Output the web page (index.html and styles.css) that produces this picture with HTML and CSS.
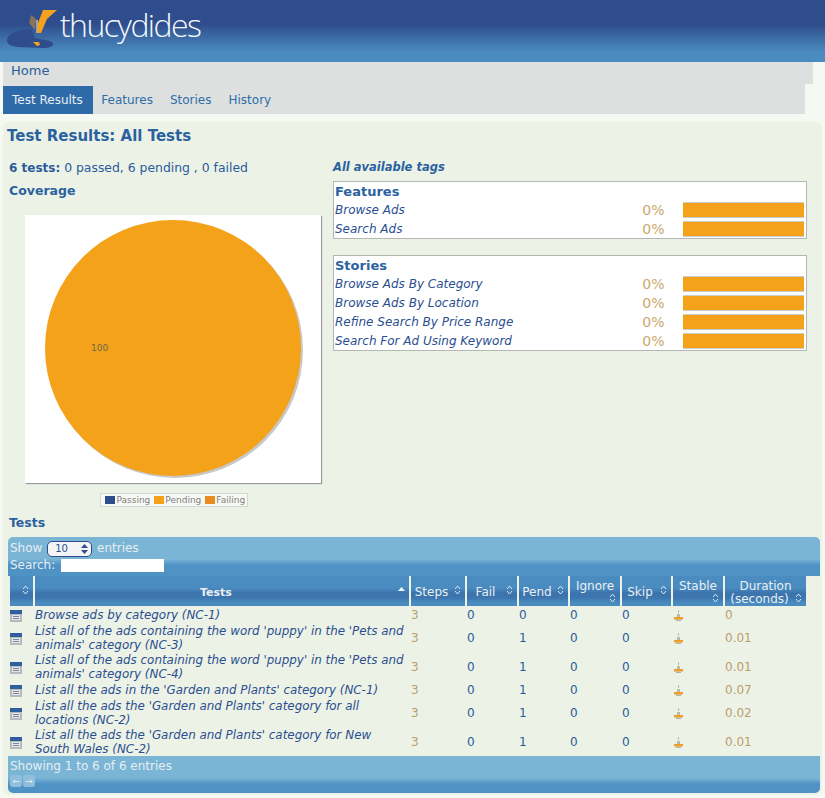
FILE: index.html
```html
<!doctype html>
<html>
  <head>
    <title>Thucydides Reports</title>
    <meta charset="utf-8"/>
    <link rel="stylesheet" href="styles.css">
  </head>
  <body>
    <div class="banner">
      <svg class="logo" width="58" height="50" viewBox="0 0 58 50">
        <path d="M2 35C3 28 12 25 26 24L30 33C38 35 46 35 48 38C49 41 45 43 38 43L12 42C6 41 2 39 2 35z" fill="#2f4c8c"/>
        <path d="M26 10L31 14 30 25 24 18z" fill="#f4a21e" opacity=".45"/>
        <path d="M31 15h2v13h-2z" fill="#9aa6b0"/>
        <path d="M38 5H52L42 14 36 28H32L33 18z" fill="#f4a21e"/>
        <path d="M28 37H34L35 40 32 41z" fill="#f4a21e"/>
      </svg>
      <span class="brand">thucydides</span>
    </div>
    <div class="nav-top"><a href="#">Home</a></div>
    <div class="nav-sub">
      <a class="on" href="#">Test Results</a>
      <a href="#">Features</a>
      <a href="#">Stories</a>
      <a href="#">History</a>
    </div>
    <div class="panel">
      <h1>Test Results: All Tests</h1>
      <div class="cols">
        <div class="left">
          <p class="summary"><b>6 tests:</b> 0 passed, 6 pending , 0 failed</p>
          <h2>Coverage</h2>
          <div class="chart">
            <svg width="296" height="268" viewBox="0 0 296 268">
              <circle cx="150" cy="135" r="128" fill="#c8c8c8"/>
              <circle cx="148" cy="133" r="128" fill="#f4a21a"/>
              <text x="66" y="136" class="pie-label">100</text>
            </svg>
          </div>
          <div class="legend">
            <i class="sw sw-pass"></i>Passing
            <i class="sw sw-pend"></i>Pending
            <i class="sw sw-fail"></i>Failing
          </div>
        </div>
        <div class="right">
          <p class="tags-title">All available tags</p>
          <div class="tagbox">
            <h3>Features</h3>
            <div class="tag"><em>Browse Ads</em><span class="pct">0%</span><span class="bar"></span></div>
            <div class="tag"><em>Search Ads</em><span class="pct">0%</span><span class="bar"></span></div>
          </div>
          <div class="tagbox">
            <h3>Stories</h3>
            <div class="tag"><em>Browse Ads By Category</em><span class="pct">0%</span><span class="bar"></span></div>
            <div class="tag"><em>Browse Ads By Location</em><span class="pct">0%</span><span class="bar"></span></div>
            <div class="tag"><em>Refine Search By Price Range</em><span class="pct">0%</span><span class="bar"></span></div>
            <div class="tag"><em>Search For Ad Using Keyword</em><span class="pct">0%</span><span class="bar"></span></div>
          </div>
        </div>
      </div>
      <h2 class="tests-title">Tests</h2>
      <div class="toolbar top">
        <div>Show <span class="select">10<svg width="7" height="10" viewBox="0 0 7 10"><path d="M3.5 0L7 4H0zM3.5 10L0 6h7z" fill="#2f4c8c"/></svg></span> entries</div>
        <div>Search: <span class="search"></span></div>
      </div>
      <table>
        <colgroup>
          <col class="c0"><col class="c1"><col class="c2"><col class="c3"><col class="c4"><col class="c5"><col class="c6"><col class="c7"><col class="c8">
        </colgroup>
        <thead>
          <tr>
            <th class="sort"></th>
            <th class="up">Tests</th>
            <th class="sort lt">Steps</th>
            <th class="sort lt">Fail</th>
            <th class="sort lt">Pend</th>
            <th class="sort tall">Ignore</th>
            <th class="sort lt">Skip</th>
            <th class="sort tall">Stable</th>
            <th class="sort tall">Duration<br><span class="unit">(seconds)</span></th>
          </tr>
        </thead>
        <tbody>
          <tr><td><svg class="cal"><use href="#cal"/></svg></td><td class="name">Browse ads by category (NC-1)</td><td class="o">3</td><td>0</td><td>0</td><td>0</td><td>0</td><td><svg class="st"><use href="#st"/></svg></td><td class="o">0</td></tr>
          <tr><td><svg class="cal"><use href="#cal"/></svg></td><td class="name">List all of the ads containing the word 'puppy' in the 'Pets and animals' category (NC-3)</td><td class="o">3</td><td>0</td><td>1</td><td>0</td><td>0</td><td><svg class="st"><use href="#st"/></svg></td><td class="o">0.01</td></tr>
          <tr><td><svg class="cal"><use href="#cal"/></svg></td><td class="name">List all of the ads containing the word 'puppy' in the 'Pets and animals' category (NC-4)</td><td class="o">3</td><td>0</td><td>1</td><td>0</td><td>0</td><td><svg class="st"><use href="#st"/></svg></td><td class="o">0.01</td></tr>
          <tr><td><svg class="cal"><use href="#cal"/></svg></td><td class="name">List all the ads in the 'Garden and Plants' category (NC-1)</td><td class="o">3</td><td>0</td><td>1</td><td>0</td><td>0</td><td><svg class="st"><use href="#st"/></svg></td><td class="o">0.07</td></tr>
          <tr><td><svg class="cal"><use href="#cal"/></svg></td><td class="name">List all the ads the 'Garden and Plants' category for all locations (NC-2)</td><td class="o">3</td><td>0</td><td>1</td><td>0</td><td>0</td><td><svg class="st"><use href="#st"/></svg></td><td class="o">0.02</td></tr>
          <tr><td><svg class="cal"><use href="#cal"/></svg></td><td class="name">List all the ads the 'Garden and Plants' category for New South Wales (NC-2)</td><td class="o">3</td><td>0</td><td>1</td><td>0</td><td>0</td><td><svg class="st"><use href="#st"/></svg></td><td class="o">0.01</td></tr>
        </tbody>
      </table>
      <div class="toolbar bottom">
        <div>Showing 1 to 6 of 6 entries</div>
        <div class="pager"><span>&#8592;</span><span>&#8594;</span></div>
      </div>
    </div>
    <svg class="defs" width="0" height="0">
      <symbol id="cal" viewBox="0 0 12 13">
        <rect y="2" width="12" height="11" fill="#b5bac0"/>
        <rect y="1" width="12" height="4" fill="#2f5f9e"/>
        <rect x="2" y="6" width="8" height="5" fill="#e4e8ea"/>
        <path d="M3 7.5h6M3 9.5h6" stroke="#7d8791"/>
      </symbol>
      <symbol id="st" viewBox="0 0 12 13">
        <path d="M5 1h1v3H5zM4 5h3v3H4z" fill="#b9b9b0"/>
        <path d="M1 8h9v2.500H1z" fill="#ef9f25"/>
        <path d="M3 10.500h5V12H3z" fill="#b9b1a0"/>
      </symbol>
    </svg>
  </body>
</html>
```

FILE: styles.css
```css
*{
  box-sizing:border-box;
}
html,body{
  margin:0;
  padding:0;
}
body{
  background:#f6f8f2;
  font-family:"DejaVu Sans",Verdana,sans-serif;
  font-size:12px;
  color:#2a4f8f;
  width:825px;
  height:798px;
  overflow:hidden;
}
a{
  text-decoration:none;
  color:inherit;
}
.banner{
  height:62px;
  display:flex;
  align-items:flex-start;
  padding:5px 0 0 5px;
  background:linear-gradient(#2f4c8c 0,#2f4c8c 24px,#4a8bc0 52px,#4a8bc0 62px);
}
.logo{
  flex:none;
}
.brand{
  font-family:"Open Sans",sans-serif;
  font-weight:300;
  font-size:32px;
  line-height:40px;
  letter-spacing:-1.6px;
  color:#f2f7fb;
  margin-left:-3px;
}
.nav-top{
  height:22px;
  width:810px;
  margin-left:3px;
  background:#dde0df;
  padding:1px 0 0 8px;
  font-size:13px;
  line-height:16px;
  color:#2a5c9a;
}
.nav-sub{
  height:30px;
  width:802px;
  margin-left:3px;
  padding-top:2px;
  background:#dde0df;
  display:flex;
  color:#2f6da8;
}
.nav-sub a{
  padding:0 8.5px;
  line-height:28px;
  font-size:12px;
}
.nav-sub a.on{
  padding:0 10px 0 9px;
  background:#2f6aa8;
  color:#e9eff2;
}
.panel{
  margin:8px 3px 0;
  height:673px;
  background:#edf2e7;
  border-radius:6px;
  padding:0 2px 0 4px;
}
h1{
  margin:0;
  padding-top:4px;
  font-size:15px;
  line-height:20px;
  color:#2a62a0;
}
.cols{
  display:flex;
}
.left{
  width:326px;
  padding-left:2px;
}
.summary{
  margin:13px 0 0;
  font-size:12.4px;
  line-height:18px;
  color:#2a5c9a;
}
.summary b{
  font-size:12px;
}
h2{
  margin:5px 0 0;
  font-size:12.5px;
  line-height:17px;
  color:#2a62a0;
}
.chart{
  margin:16px 0 0 16px;
  width:296px;
  height:268px;
  background:#fff;
  box-shadow:1px 1px 1px #999;
}
.pie-label{
  font-size:9px;
  fill:#6d6a50;
}
.legend{
  display:flex;
  width:max-content;
  align-items:center;
  gap:1.5px;
  height:14px;
  margin:10px 0 0 91px;
  padding:0 2px;
  background:#f8f9f5;
  border:1px solid #d5d7d2;
  font-size:9px;
  color:#7d8080;
}
.sw{
  width:10px;
  height:8px;
  margin-left:2px;
}
.sw-pass{
  background:#2f4c8c;
}
.sw-pend{
  background:#f4a21a;
}
.sw-fail{
  background:#e88c20;
}
.right{
  width:474px;
}
.tags-title{
  margin:13px 0 0;
  line-height:17px;
  font-weight:bold;
  font-style:italic;
  font-size:11.5px;
  color:#2a62a0;
}
.tagbox{
  background:#fff;
  border:1px solid #b4b6b4;
  margin:5px 0 16px;
  padding:1px 2px 0 1px;
}
.tagbox + .tagbox{
  margin-top:0;
}
h3{
  margin:0;
  font-size:13px;
  line-height:17px;
  color:#2a62a0;
}
.tag{
  display:flex;
  align-items:center;
  height:19px;
}
.tag em{
  width:308px;
  font-size:12px;
  color:#2a4f8f;
}
.pct{
  width:41px;
  font-size:14px;
  color:#cda86c;
}
.bar{
  width:121px;
  height:16px;
  background:#f4a21a;
  border:1px solid #c8cdd0;
  border-width:1px 0 1px 0;
}
.tests-title{
  margin:0;
  padding:7px 0 0 2px;
}
.toolbar{
  width:812px;
  margin-left:1px;
  padding-left:2px;
  font-size:12px;
  line-height:16px;
  color:#e6eef2;
  background:linear-gradient(#7ab5d6 0,#7ab5d6 22px,#4f92c4 28px,#4f92c4 100%);
}
.toolbar.top{
  margin-top:6px;
  height:39px;
  border-radius:5px 5px 0 0;
  padding-top:3px;
}
.toolbar.bottom{
  height:37px;
  margin-top:-1px;
  position:relative;
  border-radius:0 0 5px 5px;
  padding-top:2px;
}
.select{
  display:inline-flex;
  align-items:center;
  justify-content:space-between;
  width:45px;
  height:16px;
  padding:0 3px 0 7px;
  margin:0 1px;
  background:#f2f4f6;
  border:1px solid #2f4c8c;
  border-radius:5px;
  font-size:10px;
  color:#2a4f8f;
  vertical-align:middle;
}
.search{
  display:inline-block;
  width:103px;
  height:13px;
  margin-left:2px;
  background:#fff;
  vertical-align:middle;
}
table{
  margin-left:1px;
  width:800px;
  table-layout:fixed;
  border-collapse:separate;
  border-spacing:2px 0;
}
.c0{width:23px}
.c1{width:374px}
.c2{width:54px}
.c3{width:50px}
.c4{width:49px}
.c5{width:50px}
.c6{width:49px}
.c7{width:50px}
.c8{width:81px}
th{
  height:31px;
  position:relative;
  background:linear-gradient(#4a8bc0 0,#4a8bc0 12px,#3c74ad 17px,#3c74ad 21px,#4a8bc0 27px) 0 0/100% 30px no-repeat;
  color:#e9eff2;
  font-size:12px;
  line-height:13px;
  font-weight:normal;
  padding:2px 0 0;
  vertical-align:middle;
}
th.lt{
  padding-right:13px;
}
th.tall{
  vertical-align:top;
  padding-top:4px;
}
th.up{
  font-size:11px;
  font-weight:bold;
  padding-right:12px;
}
.unit{
  display:inline-block;
  margin-right:12px;
}
th.sort::after,th.up::after{
  content:"";
  position:absolute;
  right:4px;
  bottom:12px;
  width:7px;
  height:10px;
  background:url("data:image/svg+xml,%3Csvg xmlns='http://www.w3.org/2000/svg' width='7' height='10'%3E%3Cpath d='M1 4l2.500-3L6 4M1 6l2.500 3L6 6' fill='none' stroke='%23dbe8f0'/%3E%3C/svg%3E");
}
th.up::after{
  background:url("data:image/svg+xml,%3Csvg xmlns='http://www.w3.org/2000/svg' width='7' height='10'%3E%3Cpath d='M0 6l3.500-4L7 6z' fill='%23f0f5f8'/%3E%3C/svg%3E");
}
th.tall.sort::after{
  bottom:4px;
}
td{
  height:17px;
  padding:1px 0;
  line-height:13.5px;
  font-size:12px;
  color:#2a5c9a;
  vertical-align:middle;
}
td.name{
  font-size:11.9px;
  font-style:italic;
  color:#2a4f8f;
}
td.o{
  color:#b9a06c;
}
.cal{
  display:block;
  width:12px;
  height:13px;
}
.st{
  display:block;
  width:12px;
  height:13px;
}
.pager{
  display:flex;
  gap:1px;
  margin-top:1px;
}
.pager span{
  width:12px;
  height:12px;
  border-radius:3px;
  background:#8fbfdc;
  color:#e6eef2;
  font-size:9px;
  line-height:12px;
  text-align:center;
}
.defs{
  position:absolute;
}
```
